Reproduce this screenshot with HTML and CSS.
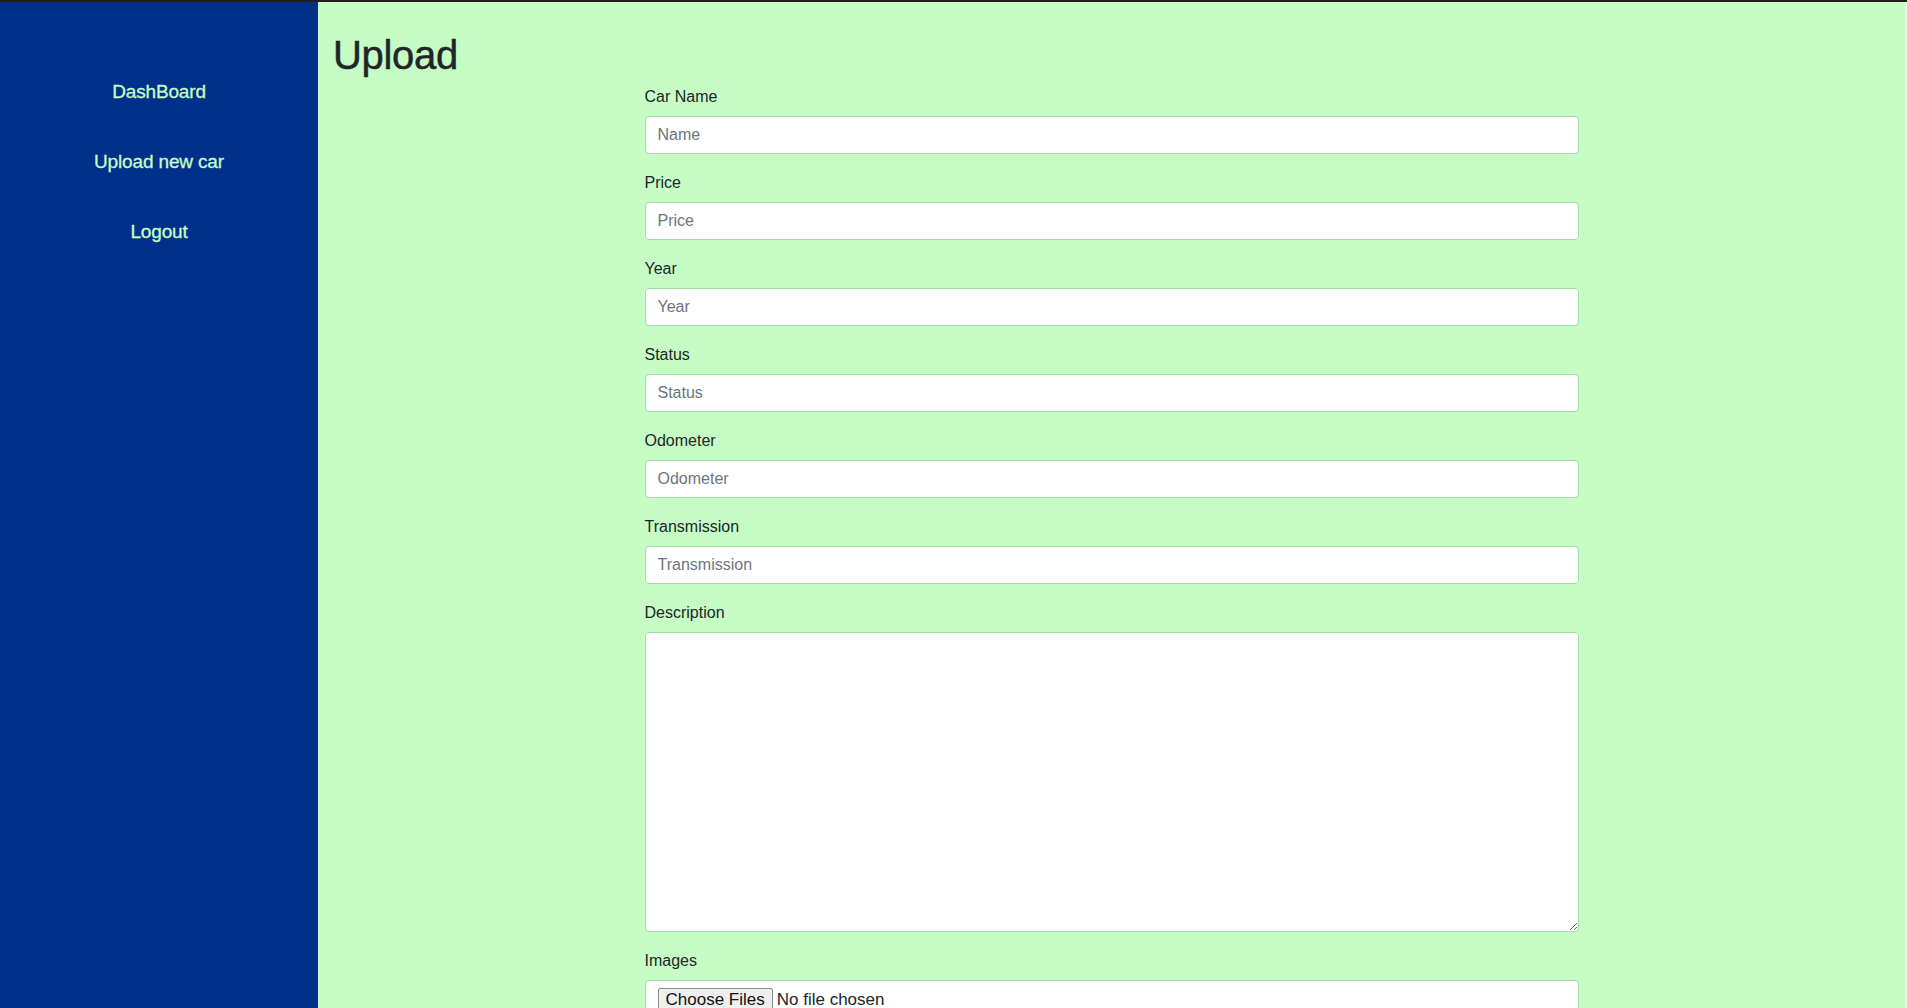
FILE: index.html
```html
<!DOCTYPE html>
<html lang="en">
<head>
<meta charset="utf-8">
<title>Upload</title>
<link rel="stylesheet" href="styles.css">
</head>
<body>
<div class="app">
  <aside class="sidebar">
    <nav class="nav">
      <a class="nav-link" href="#">DashBoard</a>
      <a class="nav-link" href="#">Upload new car</a>
      <a class="nav-link" href="#">Logout</a>
    </nav>
  </aside>
  <main class="main">
    <h1 class="title">Upload</h1>
    <form class="upload-form">
      <div class="form-group">
        <label class="label" for="name">Car Name</label>
        <input class="control" id="name" type="text" placeholder="Name">
      </div>
      <div class="form-group">
        <label class="label" for="price">Price</label>
        <input class="control" id="price" type="text" placeholder="Price">
      </div>
      <div class="form-group">
        <label class="label" for="year">Year</label>
        <input class="control" id="year" type="text" placeholder="Year">
      </div>
      <div class="form-group">
        <label class="label" for="status">Status</label>
        <input class="control" id="status" type="text" placeholder="Status">
      </div>
      <div class="form-group">
        <label class="label" for="odometer">Odometer</label>
        <input class="control" id="odometer" type="text" placeholder="Odometer">
      </div>
      <div class="form-group">
        <label class="label" for="transmission">Transmission</label>
        <input class="control" id="transmission" type="text" placeholder="Transmission">
      </div>
      <div class="form-group">
        <label class="label" for="description">Description</label>
        <textarea class="control textarea" id="description"></textarea>
      </div>
      <div class="form-group">
        <label class="label" for="images">Images</label>
        <div class="control file-box">
          <input class="file-input" id="images" type="file" multiple>
        </div>
      </div>
    </form>
  </main>
</div>
</body>
</html>
```
FILE: styles.css
```css
* {
  box-sizing: border-box;
}

html, body {
  margin: 0;
  padding: 0;
  height: 100%;
}

body {
  font-family: "Liberation Sans", Arial, Helvetica, sans-serif;
  color: #212529;
  border-top: 2px solid #1e1e1e;
  background: #f2f2f2;
  overflow: hidden;
}

.app {
  display: flex;
  height: calc(100vh - 2px);
  margin-right: 2px;
  overflow: hidden;
}

.sidebar {
  width: 318px;
  flex: 0 0 318px;
  background: #00308a;
}

.nav {
  display: flex;
  flex-direction: column;
  align-items: center;
  gap: 46px;
  padding-top: 78px;
}

.nav-link {
  color: #c6fdc6;
  text-decoration: none;
  font-size: 19px;
  line-height: 24px;
  letter-spacing: -0.15px;
  -webkit-text-stroke: 0.3px currentColor;
}

.main {
  flex: 1;
  background: #c5fdc5;
  padding: 0 15px;
}

.title {
  font-size: 40px;
  font-weight: 400;
  line-height: 48px;
  margin: 29px 0 5px;
  letter-spacing: -0.3px;
  -webkit-text-stroke: 0.5px currentColor;
}

.upload-form {
  width: 934px;
  margin: 0 auto;
}

.form-group {
  margin-bottom: 16px;
}

.label {
  display: block;
  font-size: 16px;
  line-height: 24px;
  padding-top: 1px;
  margin-bottom: 7px;
}

.control {
  display: block;
  width: 100%;
  height: 38px;
  padding: 6px 12px;
  font-family: inherit;
  font-size: 16px;
  line-height: 24px;
  color: #495057;
  background: #ffffff;
  border: 1px solid #a4daa4;
  border-radius: 4px;
  outline: none;
}

.control::placeholder {
  color: #6c757d;
}

.textarea {
  height: 300px;
  resize: vertical;
}

.file-box {
  padding: 7px 12px;
}

.file-input {
  font-family: inherit;
  font-size: 17px;
  color: #212529;
}

.file-input::file-selector-button {
  font-family: inherit;
  font-size: 17px;
  background: #efefef;
  color: #111;
  border: 1px solid #8a8a8a;
  border-radius: 2px;
  padding: 1px 7px;
  margin-right: 4px;
}
```
